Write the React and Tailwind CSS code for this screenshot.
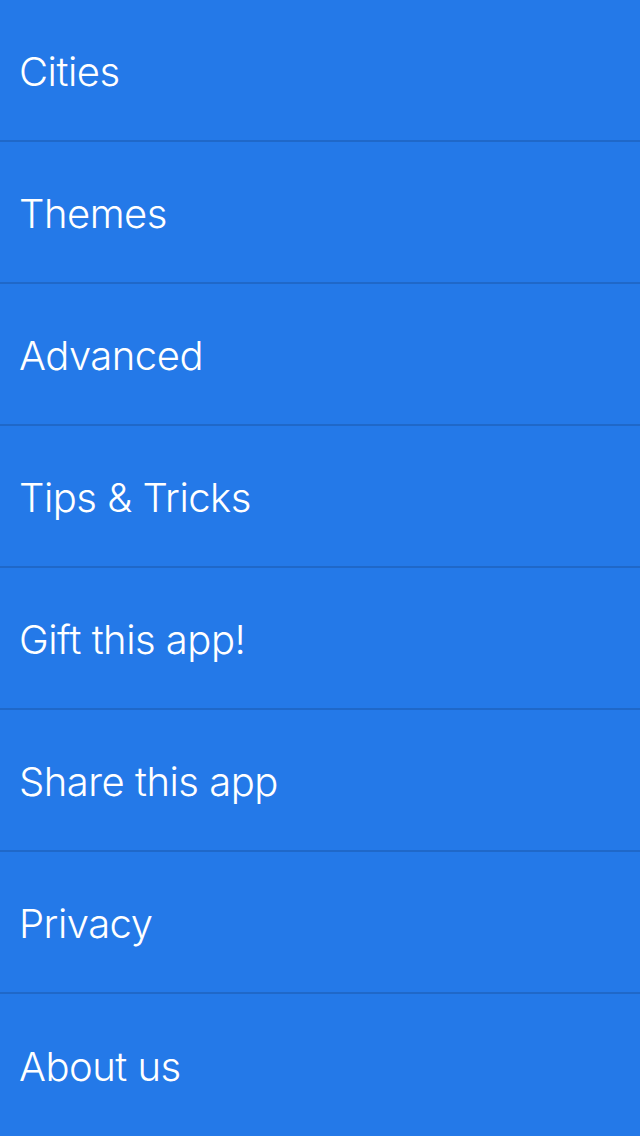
export default function App() {
  const items = ["Cities","Themes","Advanced","Tips & Tricks","Gift this app!","Share this app","Privacy","About us"];
  return (
    <div className="w-[640px] h-[1136px] bg-[#2479e8] overflow-hidden flex flex-col" style={{fontFamily: "'Inter', 'Liberation Sans', sans-serif"}}>
      {items.map((t, i) => (
        <div key={i} className={"h-[142px] shrink-0 flex items-center pl-[19px] pt-[4px] text-white text-[40px] font-light tracking-[-0.5px] " + (i < items.length - 1 ? "border-b-2 border-[#1f68c9]" : "")}>
          {t}
        </div>
      ))}
    </div>
  );
}
